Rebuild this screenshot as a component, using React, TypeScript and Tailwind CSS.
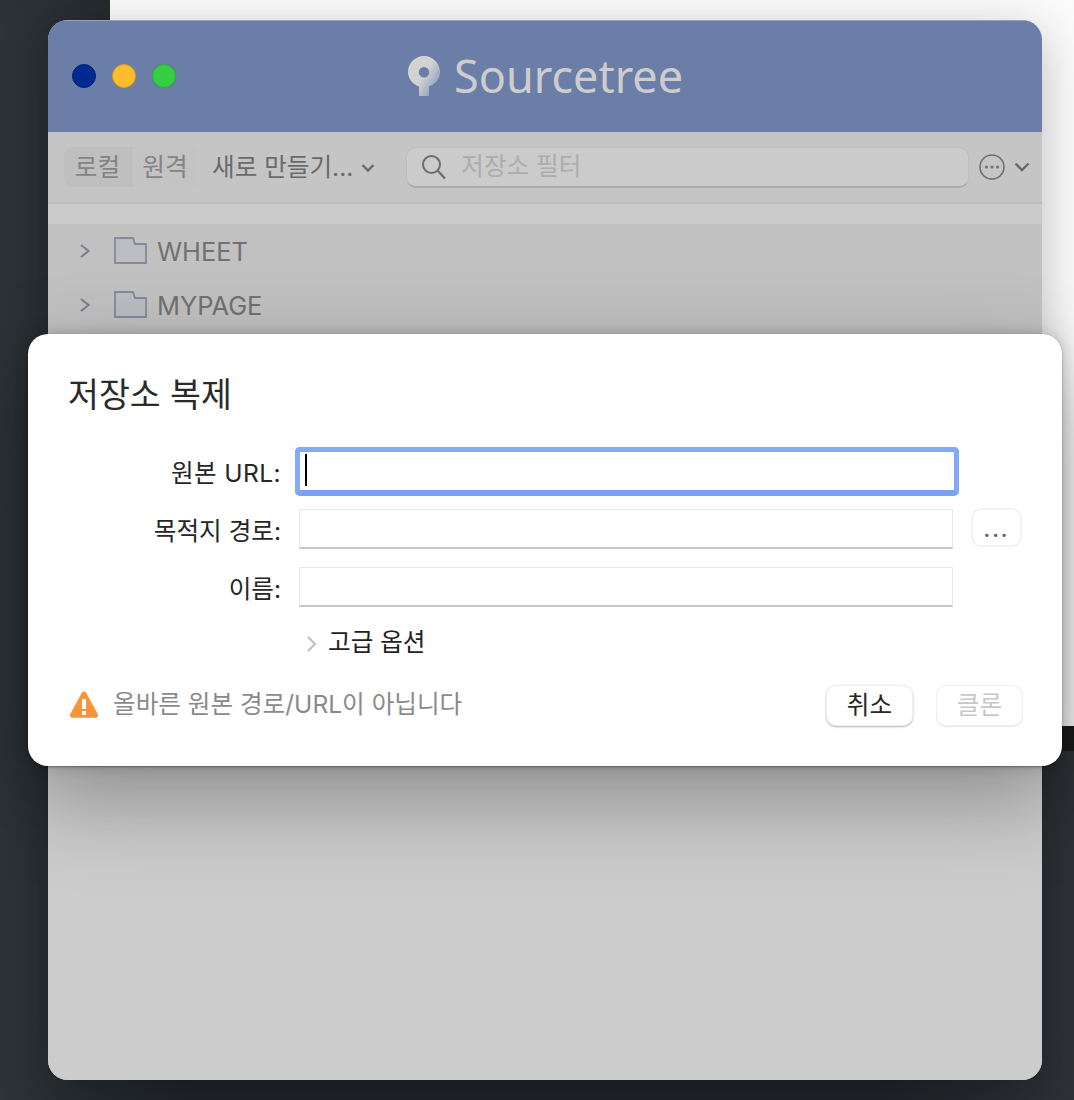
import type { FC, ReactNode } from 'react';

const kr = "font-['Inter','Noto_Sans_CJK_KR',sans-serif]";

const Folder: FC<{ label: string }> = ({ label }) => (
  <div className="flex h-[54px] items-center">
    <svg width="12" height="16" viewBox="0 0 12 16" className="ml-[31px]" fill="none">
      <path d="M2 2 L9.500 8 L2 14" stroke="#7b8191" strokeWidth="2.200" />
    </svg>
    <svg width="33" height="27" viewBox="0 0 33 27" className="-mt-[1px] ml-[23px]">
      <path d="M1 26V1h18l2 6h11v19z" fill="#bcbdc2" stroke="#848a9c" strokeWidth="1.800" />
    </svg>
    <span className={`ml-[10px] mt-[2px] text-[25.4px] text-[#717171] ${kr}`}>{label}</span>
  </div>
);

const Field: FC<{ label: string; wide?: boolean; children?: ReactNode }> = ({ label, wide, children }) => (
  <div className="flex h-[58px] items-center">
    <div className={`w-[271px] pr-[18px] pt-[4px] text-right text-[24.6px] text-[#262626] ${wide ? 'tracking-[0.4px]' : ''} ${kr}`}>{label}</div>
    {children ?? (
      <div className="h-[40px] w-[654px] border border-[#e8e8e8] border-b-2 border-b-[#c6c6c6]" />
    )}
  </div>
);

export default function App() {
  return (
    <div className="relative h-[1100px] w-[1074px] overflow-hidden bg-[linear-gradient(90deg,#2d3337,#1f2327_18%,#1f2327_82%,#2e3236)]">
      {/* backdrop window behind the app */}
      <div className="absolute left-[110px] top-0 h-[726px] w-[964px] bg-[#fbfbfb]" />
      <div className="absolute left-[1042px] top-[726px] h-[25px] w-[32px] bg-[#1a1b1c]" />

      {/* Sourcetree window */}
      <div className="absolute left-[48px] top-[20px] flex h-[1060px] w-[994px] flex-col overflow-hidden rounded-[20px] bg-[#cbcbcb] shadow-[0_12px_50px_rgba(0,0,0,0.25)]">
        <div className="flex h-[112px] shrink-0 items-center border-t border-[#98a2b6] bg-[#6b7ea8] pb-[2px]">
          <div className="ml-[24px] flex gap-[16px]">
            <span className="h-[24px] w-[24px] rounded-full border border-[#001f7a] bg-[#002a92]" />
            <span className="h-[24px] w-[24px] rounded-full border border-[#d99a1d] bg-[#febc2e]" />
            <span className="h-[24px] w-[24px] rounded-full border border-[#2aa836] bg-[#36ce43]" />
          </div>
          <svg width="32" height="40" viewBox="0 0 32 40" className="ml-[232px]">
            <defs>
              <linearGradient id="logo" x1="0.35" y1="0.35" x2="0.85" y2="0.75">
                <stop offset="0.3" stopColor="#d2d2d2" />
                <stop offset="1" stopColor="#98a6c0" />
              </linearGradient>
            </defs>
            <path
              fillRule="evenodd"
              d="M16 0C7.200 0 0 7.200 0 16c0 6.400 4.200 12 11 14.500V40h10V30.500C27.800 28 32 22.400 32 16 32 7.200 24.800 0 16 0zm0 11a5.300 5.300 0 1 1 0 10.600A5.300 5.300 0 0 1 16 11z"
              fill="url(#logo)"
            />
          </svg>
          <span className="ml-[14px] font-['Noto_Sans',sans-serif] text-[45px] leading-none text-[#cdcdcd]">Sourcetree</span>
        </div>

        <div className={`flex h-[72px] shrink-0 items-center border-b-2 border-[#bdbdbd] bg-[#c5c5c5] ${kr}`}>
          <div className="ml-[16px] flex h-[40px] w-[134px] rounded-[8px] text-[24.6px]">
            <span className="flex w-[68px] items-center justify-center rounded-l-[8px] border-r border-[#bababa] bg-[#bfbfbf] text-[#848484]">로컬</span>
            <span className="flex flex-1 items-center justify-center rounded-r-[8px] bg-[#c3c3c3] text-[#848484]">원격</span>
          </div>
          <span className="ml-[14px] text-[24.6px] text-[#6a6a6a]">새로 만들기...</span>
          <svg width="14" height="10" viewBox="0 0 14 10" className="ml-[8px] mt-[2px]" fill="none">
            <path d="M1.500 2 L7 7.500 L12.500 2" stroke="#6a6a6a" strokeWidth="2.400" />
          </svg>
          <div className="ml-[31px] flex h-[41px] w-[563px] items-center rounded-[10px] border border-[#bfbfbf] border-b-2 border-b-[#aaaaaa] bg-[#cbcbcb]">
            <svg width="26" height="26" viewBox="0 0 26 26" className="ml-[14px]" fill="none">
              <circle cx="10.500" cy="10.500" r="8.500" stroke="#6e6e6e" strokeWidth="2" />
              <path d="M17 17 L24 24.500" stroke="#6e6e6e" strokeWidth="2.400" />
            </svg>
            <span className="ml-[14px] text-[24.6px] text-[#adadad]">저장소 필터</span>
          </div>
          <svg width="26" height="26" viewBox="0 0 26 26" className="ml-[10px]" fill="none">
            <circle cx="13" cy="13" r="12" stroke="#6e6e6e" strokeWidth="1.600" />
            <circle cx="7.500" cy="13" r="1.500" fill="#6e6e6e" />
            <circle cx="13" cy="13" r="1.500" fill="#6e6e6e" />
            <circle cx="18.500" cy="13" r="1.500" fill="#6e6e6e" />
          </svg>
          <svg width="16" height="10" viewBox="0 0 16 10" className="ml-[9px]" fill="none">
            <path d="M1.500 1.500 L8 8 L14.500 1.500" stroke="#6a6a6a" strokeWidth="2.400" />
          </svg>
        </div>

        <div className="h-[20px] shrink-0 bg-[#cbcbcb]" />

        <div className="flex h-[542px] shrink-0 flex-col bg-[#c1c1c1]">
          <Folder label="WHEET" />
          <Folder label="MYPAGE" />
        </div>
        <div className="flex-1 bg-[#cccccc]" />
      </div>

      {/* clone dialog */}
      <div className={`absolute left-[28px] top-[334px] h-[432px] w-[1034px] rounded-[20px] bg-white px-[40px] pt-[38px] shadow-[0_32px_90px_rgba(0,0,0,0.32),0_0_14px_rgba(0,0,0,0.18),0_1px_2px_rgba(0,0,0,0.35)] ${kr}`}>
        <h1 className="text-[33.6px] leading-[46px] text-[#2a2a2a]">저장소 복제</h1>
        <div className="-ml-[40px] mt-[24px]">
          <Field label="원본 URL:" wide>
            <div className="h-[49px] w-[664px] -translate-x-[4px] rounded-[5px] border-[5px] border-[#82aaf5] border-b-[6px] border-b-[#7aa3ef] bg-white pl-[5px] pt-[2px]">
              <div className="h-[32px] w-[2px] bg-black" />
            </div>
          </Field>
          <Field label="목적지 경로:">
            <div className="h-[40px] w-[654px] border border-[#e8e8e8] border-b-2 border-b-[#c6c6c6]" />
            <button className="ml-[18px] flex h-[39px] w-[51px] -translate-y-[2px] items-center justify-center rounded-[10px] border-2 border-[#f2f2f2] bg-white pt-[6px] text-[20px] font-bold leading-none tracking-[2px] text-[#666]">...</button>
          </Field>
          <Field label="이름:" />
          <div className="mt-[3px] flex h-[46px] items-center pl-[278px]">
            <svg width="12" height="18" viewBox="0 0 12 18" className="mt-[4px]" fill="none">
              <path d="M2 2 L9 9 L2 16" stroke="#c4c4c4" strokeWidth="2.400" />
            </svg>
            <span className="ml-[10px] text-[24.6px] text-[#222]">고급 옵션</span>
          </div>
        </div>
        <div className="mt-[17px] flex h-[44px] items-center">
          <svg width="30" height="29" viewBox="0 0 30 29" className="ml-[1px]">
            <path d="M15 1.500 a2.500 2.500 0 0 1 2.200 1.300 L28.700 24 a2.500 2.500 0 0 1 -2.200 3.800 H3.500 a2.500 2.500 0 0 1 -2.200 -3.800 L12.800 2.800 A2.500 2.500 0 0 1 15 1.500z" fill="#fb9338" />
            <rect x="13" y="9" width="4" height="10" fill="white" />
            <rect x="13" y="21" width="4" height="4" fill="white" />
          </svg>
          <span className="ml-[14px] text-[24.6px] text-[#8a8a8a]">올바른 원본 경로/URL이 아닙니다</span>
          <button className="ml-auto mt-[2px] flex h-[41px] w-[87px] items-center justify-center rounded-[10px] border border-[#ededed] bg-white text-[24.6px] text-[#262626] shadow-[0_1px_2px_rgba(0,0,0,0.3)]">취소</button>
          <button className="ml-[23px] mr-[-1px] mt-[2px] flex h-[41px] w-[87px] items-center justify-center rounded-[10px] border border-[#efefef] bg-white text-[24.6px] text-[#c8c8c8] shadow-[0_1px_1px_rgba(0,0,0,0.1)]">클론</button>
        </div>
      </div>
    </div>
  );
}
